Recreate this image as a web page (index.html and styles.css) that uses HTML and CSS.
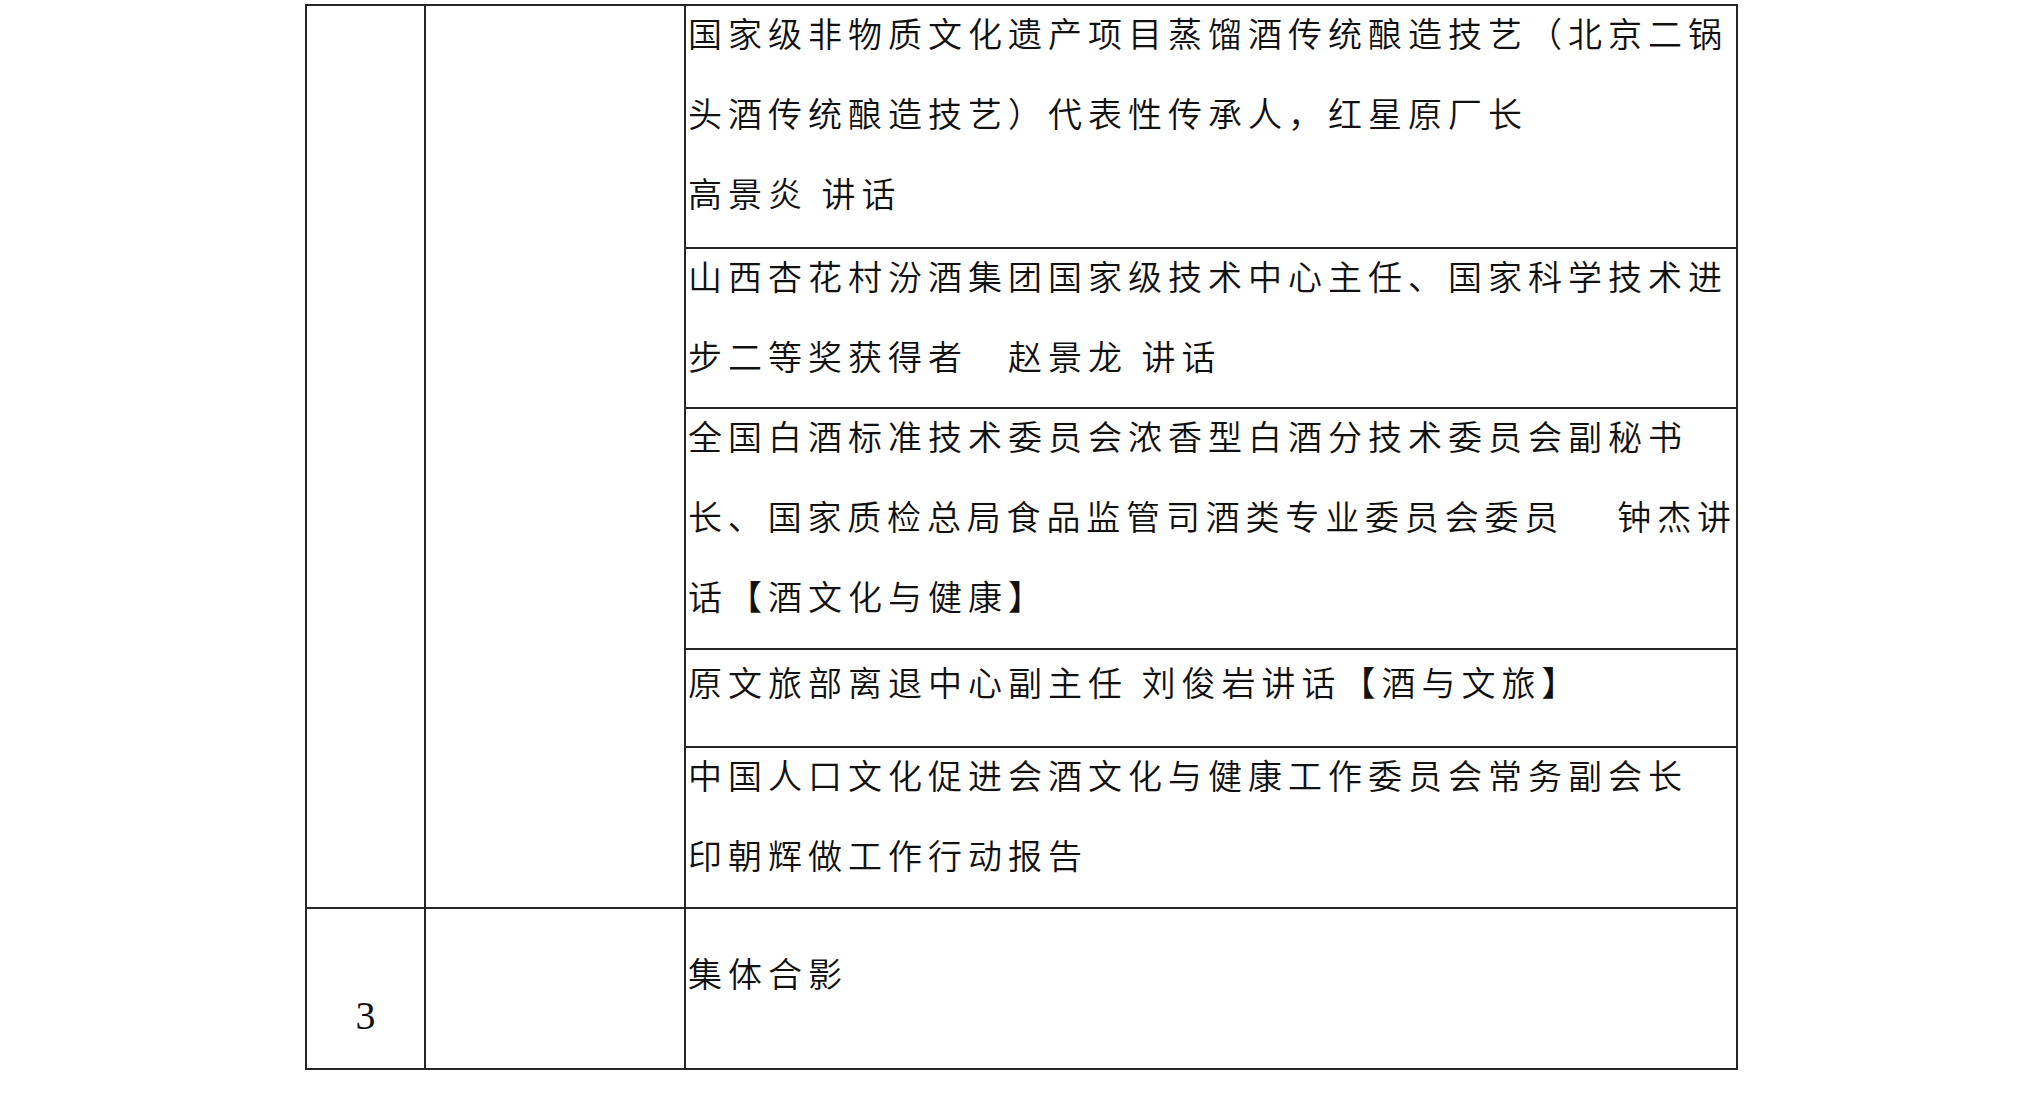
FILE: index.html
```html
<!DOCTYPE html>
<html lang="zh-CN">
<head>
<meta charset="utf-8">
<title>议程</title>
<link rel="stylesheet" href="styles.css">
</head>
<body>
<table class="agenda">
  <colgroup>
    <col class="c-no">
    <col class="c-time">
    <col class="c-item">
  </colgroup>
  <tbody>
    <tr class="r1">
      <td class="no" rowspan="5"></td>
      <td class="time" rowspan="5"></td>
      <td class="item">
        <div class="ln">国家级非物质文化遗产项目蒸馏酒传统酿造技艺（北京二锅</div>
        <div class="ln">头酒传统酿造技艺）代表性传承人，红星原厂长</div>
        <div class="ln">高景炎 讲话</div>
      </td>
    </tr>
    <tr class="r2">
      <td class="item">
        <div class="ln">山西杏花村汾酒集团国家级技术中心主任、国家科学技术进</div>
        <div class="ln">步二等奖获得者　赵景龙 讲话</div>
      </td>
    </tr>
    <tr class="r3">
      <td class="item">
        <div class="ln">全国白酒标准技术委员会浓香型白酒分技术委员会副秘书</div>
        <div class="ln ln-just">长、国家质检总局食品监管司酒类专业委员会委员　 钟杰讲</div>
        <div class="ln">话【酒文化与健康】</div>
      </td>
    </tr>
    <tr class="r4">
      <td class="item item-single">
        <div class="ln">原文旅部离退中心副主任 刘俊岩讲话【酒与文旅】</div>
      </td>
    </tr>
    <tr class="r5">
      <td class="item">
        <div class="ln">中国人口文化促进会酒文化与健康工作委员会常务副会长</div>
        <div class="ln">印朝辉做工作行动报告</div>
      </td>
    </tr>
    <tr class="r6">
      <td class="no num">3</td>
      <td class="time"></td>
      <td class="item item-last">
        <div class="ln">集体合影</div>
      </td>
    </tr>
  </tbody>
</table>
</body>
</html>
```
FILE: styles.css
```css
html, body {
  margin: 0;
  padding: 0;
  background: #ffffff;
}

body {
  width: 2028px;
  height: 1104px;
  overflow: hidden;
  font-family: "Noto Sans CJK SC", "Noto Sans", sans-serif;
  color: #111111;
}

.agenda {
  border-collapse: collapse;
  table-layout: fixed;
  width: 1431px;
  margin: 4px 0 0 305px;
}

.c-no { width: 119px; }
.c-time { width: 260px; }
.c-item { width: 1052px; }

.agenda td {
  border: 2px solid #262626;
  padding: 0;
  vertical-align: top;
}

.r1 { height: 243px; }
.r2 { height: 160px; }
.r3 { height: 241px; }
.r4 { height: 98px; }
.r5 { height: 161px; }
.r6 { height: 161px; }

.item {
  padding: 7px 0 0 2px !important;
  font-size: 34px;
  font-weight: 350;
  letter-spacing: 6px;
}

.item-single {
  padding-top: 12px !important;
}

.item-last {
  padding-top: 44px !important;
}

.ln {
  height: 80px;
  line-height: 40px;
  white-space: nowrap;
}

.ln:last-child {
  height: 40px;
}

.ln-just {
  text-align: justify;
  text-align-last: justify;
  letter-spacing: 5px;
}

.num {
  font-family: "Liberation Serif", "DejaVu Serif", serif;
  font-size: 40px;
  text-align: center;
  vertical-align: middle !important;
  padding-top: 54px !important;
  color: #111;
}
```
